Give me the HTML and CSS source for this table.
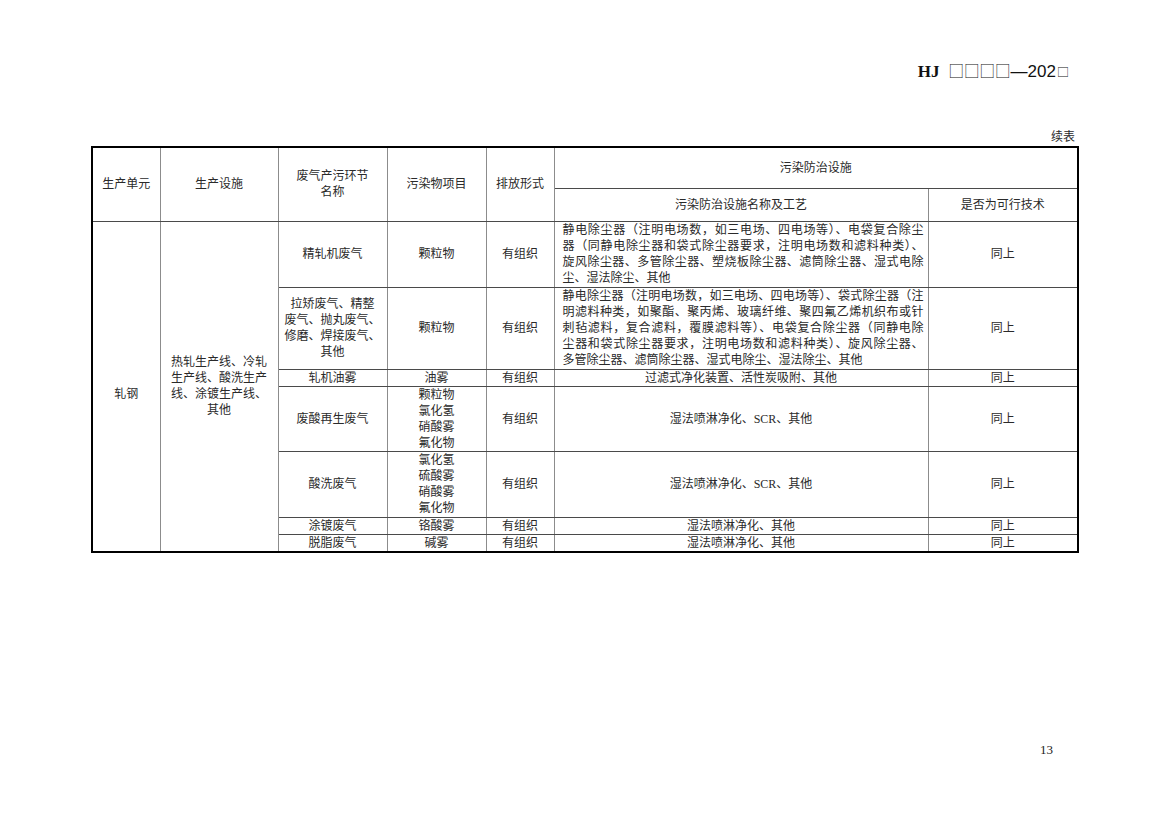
FILE: index.html
```html
<!DOCTYPE html>
<html lang="zh-CN">
<head>
<meta charset="utf-8">
<title>HJ 续表</title>
<link rel="stylesheet" href="styles.css">
</head>
<body>
<div class="page">
  <div class="doc-head"><span class="hj">HJ</span><span class="sq">□□□□</span><span class="yr">—202</span><span class="sq2">□</span></div>
  <div class="cont">续表</div>
  <table class="grid">
    <colgroup>
      <col class="c1"><col class="c2"><col class="c3"><col class="c4"><col class="c5"><col class="c6"><col class="c7">
    </colgroup>
    <thead>
      <tr class="h1">
        <th rowspan="2">生产单元</th>
        <th rowspan="2">生产设施</th>
        <th rowspan="2">废气产污环节<br>名称</th>
        <th rowspan="2">污染物项目</th>
        <th rowspan="2">排放形式</th>
        <th colspan="2">污染防治设施</th>
      </tr>
      <tr class="h2">
        <th>污染防治设施名称及工艺</th>
        <th>是否为可行技术</th>
      </tr>
    </thead>
    <tbody>
      <tr class="r1">
        <td rowspan="7" class="unit">轧钢</td>
        <td rowspan="7">热轧生产线、冷轧<br>生产线、酸洗生产<br>线、涂镀生产线、<br>其他</td>
        <td>精轧机废气</td>
        <td>颗粒物</td>
        <td>有组织</td>
        <td class="desc">
          <span class="jl">静电除尘器（注明电场数，如三电场、四电场等）、电袋复合除尘</span>
          <span class="jl">器（同静电除尘器和袋式除尘器要求，注明电场数和滤料种类）、</span>
          <span class="jl">旋风除尘器、多管除尘器、塑烧板除尘器、滤筒除尘器、湿式电除</span>
          <span class="ll">尘、湿法除尘、其他</span>
        </td>
        <td>同上</td>
      </tr>
      <tr class="r2">
        <td>拉矫废气、精整<br>废气、抛丸废气、<br>修磨、焊接废气、<br>其他</td>
        <td>颗粒物</td>
        <td>有组织</td>
        <td class="desc">
          <span class="jl">静电除尘器（注明电场数，如三电场、四电场等）、袋式除尘器（注</span>
          <span class="jl">明滤料种类，如聚酯、聚丙烯、玻璃纤维、聚四氟乙烯机织布或针</span>
          <span class="jl">刺毡滤料，复合滤料，覆膜滤料等）、电袋复合除尘器（同静电除</span>
          <span class="jl">尘器和袋式除尘器要求，注明电场数和滤料种类）、旋风除尘器、</span>
          <span class="ll">多管除尘器、滤筒除尘器、湿式电除尘、湿法除尘、其他</span>
        </td>
        <td>同上</td>
      </tr>
      <tr class="r3">
        <td>轧机油雾</td>
        <td>油雾</td>
        <td>有组织</td>
        <td>过滤式净化装置、活性炭吸附、其他</td>
        <td>同上</td>
      </tr>
      <tr class="r4">
        <td>废酸再生废气</td>
        <td>颗粒物<br>氯化氢<br>硝酸雾<br>氟化物</td>
        <td>有组织</td>
        <td>湿法喷淋净化、SCR、其他</td>
        <td>同上</td>
      </tr>
      <tr class="r5">
        <td>酸洗废气</td>
        <td>氯化氢<br>硫酸雾<br>硝酸雾<br>氟化物</td>
        <td>有组织</td>
        <td>湿法喷淋净化、SCR、其他</td>
        <td>同上</td>
      </tr>
      <tr class="r6">
        <td>涂镀废气</td>
        <td>铬酸雾</td>
        <td>有组织</td>
        <td>湿法喷淋净化、其他</td>
        <td>同上</td>
      </tr>
      <tr class="r7">
        <td>脱脂废气</td>
        <td>碱雾</td>
        <td>有组织</td>
        <td>湿法喷淋净化、其他</td>
        <td>同上</td>
      </tr>
    </tbody>
  </table>
  <div class="pno">13</div>
</div>
</body>
</html>
```

FILE: styles.css
```css
html, body {
  margin: 0;
  padding: 0;
  background: #ffffff;
}
body {
  font-family: "Liberation Serif", "Noto Sans CJK SC", serif;
  color: #2a2a2a;
}
.page {
  width: 1169px;
  height: 826px;
  display: flex;
  flex-direction: column;
  box-sizing: border-box;
}
.doc-head {
  padding-top: 60px;
  padding-right: 100px;
  text-align: right;
  font-size: 16px;
  line-height: 20px;
  color: #111;
  white-space: nowrap;
}
.doc-head .hj {
  font-family: "Liberation Serif", serif;
  font-weight: bold;
  font-size: 17px;
  margin-right: 9px;
}
.doc-head .sq {
  font-family: "Noto Sans CJK SC", sans-serif;
  font-size: 15.5px;
  font-weight: 300;
}
.doc-head .yr {
  font-family: "Liberation Sans", sans-serif;
  font-size: 17px;
}
.doc-head .sq2 {
  font-family: "Noto Sans CJK SC", sans-serif;
  font-size: 12px;
  font-weight: 300;
  margin-left: 1px;
}
.cont {
  margin-top: 47px;
  padding-right: 94px;
  text-align: right;
  font-size: 12px;
  line-height: 16px;
}
.grid {
  margin-top: 1px;
  margin-left: 91px;
  width: 986px;
  table-layout: fixed;
  border-collapse: collapse;
  border: 2px solid #000;
  font-size: 12px;
  line-height: 16px;
}
.c1 { width: 68px; }
.c2 { width: 118px; }
.c3 { width: 109px; }
.c4 { width: 99px; }
.c5 { width: 68px; }
.c6 { width: 374px; }
.c7 { width: 150px; }
.grid th,
.grid td {
  border-left: 1px solid #8c8c8c;
  border-right: 1px solid #8c8c8c;
  border-top: 1px solid #4a4a4a;
  border-bottom: 1px solid #4a4a4a;
  padding: 0 2px;
  text-align: center;
  vertical-align: middle;
  font-weight: normal;
}
.grid .h1 { height: 41px; }
.grid .h2 { height: 33px; }
.grid .r1 { height: 66px; }
.grid .r2 { height: 82px; }
.grid .r3 { height: 17px; }
.grid .r4 { height: 65px; }
.grid .r5 { height: 66px; }
.grid .r6 { height: 17px; }
.grid .r7 { height: 16px; }
.grid td.unit {
  padding-top: 16px;
}
.grid td.desc {
  text-align: left;
  padding: 0 4px 0 8px;
}
.jl {
  display: block;
  text-align: justify;
  text-align-last: justify;
  white-space: nowrap;
}
.ll {
  display: block;
  text-align: left;
  white-space: nowrap;
}
.pno {
  margin-top: auto;
  padding-bottom: 68px;
  padding-right: 116px;
  text-align: right;
  font-size: 13px;
  line-height: 16px;
  color: #222;
}
```
